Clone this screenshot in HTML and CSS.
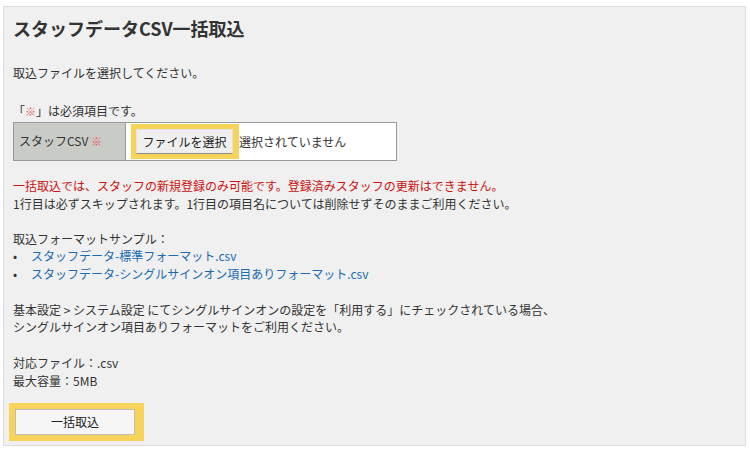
FILE: index.html
```html
<!DOCTYPE html>
<html lang="ja">
<head>
<meta charset="utf-8">
<title>スタッフデータCSV一括取込</title>
<link rel="stylesheet" href="styles.css">
</head>
<body>
<div class="panel">
  <h1 class="title">スタッフデータCSV一括取込</h1>
  <p class="lead">取込ファイルを選択してください。</p>
  <p class="req-note">「<span class="mark">※</span>」は必須項目です。</p>
  <table class="form-table">
    <tr>
      <th class="label">スタッフCSV <span class="mark">※</span></th>
      <td class="value">
        <div class="file-row">
          <span class="hl hl-file"><span class="btn btn-file">ファイルを選択</span></span>
          <span class="file-status">選択されていません</span>
        </div>
      </td>
    </tr>
  </table>
  <p class="notes"><span class="warn">一括取込では、スタッフの新規登録のみ可能です。登録済みスタッフの更新はできません。</span><br>1行目は必ずスキップされます。1行目の項目名については削除せずそのままご利用ください。</p>
  <p class="para">取込フォーマットサンプル：</p>
  <ul class="samples">
    <li><a class="link" href="#">スタッフデータ-標準フォーマット.csv</a></li>
    <li><a class="link" href="#">スタッフデータ-シングルサインオン項目ありフォーマット.csv</a></li>
  </ul>
  <p class="para gap">基本設定 &gt; システム設定 にてシングルサインオンの設定を「利用する」にチェックされている場合、<br>シングルサインオン項目ありフォーマットをご利用ください。</p>
  <p class="para gap">対応ファイル：.csv<br>最大容量：5MB</p>
  <div class="actions">
    <span class="hl hl-submit"><span class="btn btn-submit">一括取込</span></span>
  </div>
</div>
</body>
</html>
```

FILE: styles.css
```css
html, body {
  margin: 0;
  padding: 0;
  background: #ffffff;
}

body {
  font-family: "Noto Sans CJK JP", "Noto Sans", sans-serif;
  font-size: 12px;
  line-height: 17.5px;
  color: #333333;
  padding: 6px 4px 0 3px;
}

.panel {
  background: #eff0ef;
  border: 1px solid #dcdcdc;
  height: 440px;
  box-sizing: border-box;
  padding: 9px 9px 0 9px;
}

.title {
  margin: 0;
  font-size: 18px;
  line-height: 24px;
  font-weight: bold;
  color: #333333;
}

p {
  margin: 0;
}

.lead {
  margin-top: 24px;
}

.req-note {
  margin-top: 20px;
}

.mark {
  color: #f05a5a;
  font-size: 11px;
}

.form-table {
  margin-top: 2px;
  border-collapse: collapse;
  width: 384px;
}

.form-table th,
.form-table td {
  border: 1px solid #9a9a9a;
  height: 37px;
  padding: 0;
}

.label {
  width: 106px;
  background: #c9cbc7;
  text-align: left;
  font-weight: normal;
  padding: 0 0 0 5px !important;
  color: #333333;
}

.value {
  background: #ffffff;
  padding: 0 0 0 5px !important;
}

.file-row {
  display: flex;
  align-items: center;
}

.hl {
  background: #f7d35a;
  display: inline-flex;
}

.hl-file {
  padding: 5px 6px 5px 5px;
}

.btn {
  display: inline-flex;
  align-items: center;
  justify-content: center;
  box-sizing: border-box;
  color: #222222;
  font-size: 12px;
}

.btn-file {
  width: 97px;
  height: 25px;
  background: #efefef;
  border: 1px solid #e2e2e2;
  border-bottom: 1px solid #8c8c8c;
}

.file-status {
  color: #333333;
}

.notes {
  margin-top: 16px;
}

.warn {
  color: #cc1111;
}

.para {
  margin-top: 17.5px;
}

.para.gap {
  margin-top: 18.5px;
}

.samples {
  list-style: none;
  margin: 0;
  padding: 0;
}

.samples li {
  display: flex;
}

.samples li::before {
  content: "•";
  width: 18px;
  flex: none;
  color: #333333;
}

.link {
  color: #1a6ab3;
  text-decoration: none;
}

.actions {
  margin-top: 14px;
  margin-left: -4px;
}

.hl-submit {
  padding: 6px 9px 6px 6px;
}

.btn-submit {
  width: 120px;
  height: 26px;
  background: #f5f6f5;
  border: 1px solid #bdbdbd;
}
```
